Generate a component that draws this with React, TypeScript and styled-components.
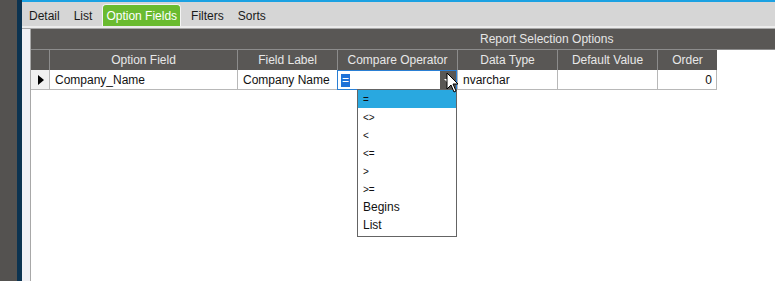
import React from 'react';
import styled, { createGlobalStyle } from 'styled-components';

const GlobalStyle = createGlobalStyle`
  html, body {
    margin: 0;
    padding: 0;
    background: #ffffff;
  }
  body {
    font-family: 'Liberation Sans', Arial, sans-serif;
    font-size: 12px;
  }
`;

const Screen = styled.div`
  display: flex;
  width: 775px;
  height: 281px;
  overflow: hidden;
`;

const SideRail = styled.div`
  width: 17px;
  background-color: #545250;
`;

const NavyEdge = styled.div`
  width: 5px;
  background-color: #0c3350;
`;

const Main = styled.div`
  flex: 1;
  display: flex;
  flex-direction: column;
  position: relative;
`;

const AccentLine = styled.div`
  height: 2px;
  background-color: #1ba1e2;
`;

const TabStrip = styled.div`
  height: 24px;
  background-color: #d6d6d6;
  display: flex;
  align-items: flex-end;
  gap: 6px;
  padding-left: 3px;
  border-bottom: 2px solid #ececec;
`;

const Tab = styled.div<{ $active?: boolean }>`
  height: 22px;
  box-sizing: border-box;
  padding: 0 3px;
  display: flex;
  align-items: center;
  color: ${(p) => (p.$active ? '#ffffff' : '#1a1a1a')};
  background-color: ${(p) => (p.$active ? '#6abb30' : 'transparent')};
  border: ${(p) => (p.$active ? '1px solid #f4f4f4' : '1px solid transparent')};
  border-bottom: none;
  border-radius: 4px 4px 0 0;
  font-size: 12px;
`;

const Body = styled.div`
  flex: 1;
  display: flex;
  border-top: 1px solid #a8a8a8;
`;

const Gutter = styled.div`
  width: 8px;
  background-color: #f0f0f4;
  border-right: 1px solid #a8a8a8;
`;

const GridArea = styled.div`
  flex: 1;
  background: #ffffff;
  display: flex;
  flex-direction: column;
`;

const GroupHeader = styled.div`
  height: 20px;
  background-color: #595755;
  color: #e6e6e6;
  display: flex;
  align-items: center;
  padding-left: 449px;
  border-bottom: 1px solid #8c8c8c;
`;

const Row = styled.div`
  display: grid;
  grid-template-columns: 18px 188px 100px 120px 100px 100px 60px;
  height: 20px;
  width: 686px;
`;

const HeadCell = styled.div`
  background-color: #595755;
  color: #e8e8e8;
  display: flex;
  align-items: center;
  justify-content: center;
  border-left: 1px solid #8c8c8c;
  &:first-child {
    border-left: none;
  }
`;

const Cell = styled.div<{ $right?: boolean }>`
  box-sizing: border-box;
  display: flex;
  align-items: center;
  justify-content: ${(p) => (p.$right ? 'flex-end' : 'flex-start')};
  padding: 0 4px 0 5px;
  color: #111111;
  border-left: 1px solid #b8b8b8;
  border-bottom: 1px solid #b8b8b8;
  &:last-child {
    border-right: 1px solid #b8b8b8;
  }
`;

const RowSelector = styled.div`
  background-color: #f0f0f0;
  border-bottom: 1px solid #b8b8b8;
  display: flex;
  align-items: center;
  justify-content: center;
  padding-left: 1px;
`;

const Triangle = styled.div`
  width: 0;
  height: 0;
  border-top: 5px solid transparent;
  border-bottom: 5px solid transparent;
  border-left: 6px solid #000000;
`;

const Editor = styled.div`
  box-sizing: border-box;
  border: 1px solid #2a7fd4;
  display: flex;
  align-items: center;
  padding-left: 3px;
  position: relative;
`;

const Selected = styled.span`
  background-color: #1e72d8;
  color: #ffffff;
  padding: 0 1px;
  line-height: 13px;
`;

const DropButton = styled.div`
  position: absolute;
  right: 0;
  top: 0;
  bottom: 0;
  width: 16px;
  background-color: #595755;
  display: flex;
  align-items: center;
  justify-content: center;
`;

const DownArrow = styled.div`
  width: 0;
  height: 0;
  border-left: 4px solid transparent;
  border-right: 4px solid transparent;
  border-top: 4px solid #ffffff;
  margin-top: 1px;
`;

const DropList = styled.div`
  position: absolute;
  left: 335px;
  top: 89px;
  width: 100px;
  box-sizing: border-box;
  border: 1px solid #646464;
  background: #ffffff;
  padding-bottom: 2px;
`;

const Option = styled.div<{ $selected?: boolean; $small?: boolean }>`
  height: 18px;
  display: flex;
  align-items: center;
  padding-left: 5px;
  font-size: ${(p) => (p.$small ? '10px' : '12px')};
  background-color: ${(p) => (p.$selected ? '#29a8e0' : 'transparent')};
  color: #111111;
`;

const Pointer = styled.svg`
  position: absolute;
  left: 424px;
  top: 72px;
`;

const columns = ['', 'Option Field', 'Field Label', 'Compare Operator', 'Data Type', 'Default Value', 'Order'];
const operators = ['=', '<>', '<', '<=', '>', '>=', 'Begins', 'List'];

export default function App() {
  return (
    <>
      <GlobalStyle />
      <Screen>
        <SideRail />
        <NavyEdge />
        <Main>
          <AccentLine />
          <TabStrip>
            <Tab>Detail</Tab>
            <Tab>List</Tab>
            <Tab $active>Option Fields</Tab>
            <Tab>Filters</Tab>
            <Tab>Sorts</Tab>
          </TabStrip>
          <Body>
            <Gutter />
            <GridArea>
              <GroupHeader>Report Selection Options</GroupHeader>
              <Row>
                {columns.map((c, i) => (
                  <HeadCell key={i}>{c}</HeadCell>
                ))}
              </Row>
              <Row>
                <RowSelector>
                  <Triangle />
                </RowSelector>
                <Cell>Company_Name</Cell>
                <Cell>Company Name</Cell>
                <Editor>
                  <Selected>=</Selected>
                  <DropButton>
                    <DownArrow />
                  </DropButton>
                </Editor>
                <Cell>nvarchar</Cell>
                <Cell />
                <Cell $right>0</Cell>
              </Row>
            </GridArea>
          </Body>
          <DropList>
            {operators.map((o, i) => (
              <Option key={o} $selected={i === 0} $small={i < 6}>
                {o}
              </Option>
            ))}
          </DropList>
          <Pointer width="14" height="22" viewBox="0 0 14 22">
            <path d="M1 1 L1 17 L5 13 L8 20 L10 19 L7 12 L12 12 Z" fill="#ffffff" stroke="#000000" strokeWidth="1" />
          </Pointer>
        </Main>
      </Screen>
    </>
  );
}
